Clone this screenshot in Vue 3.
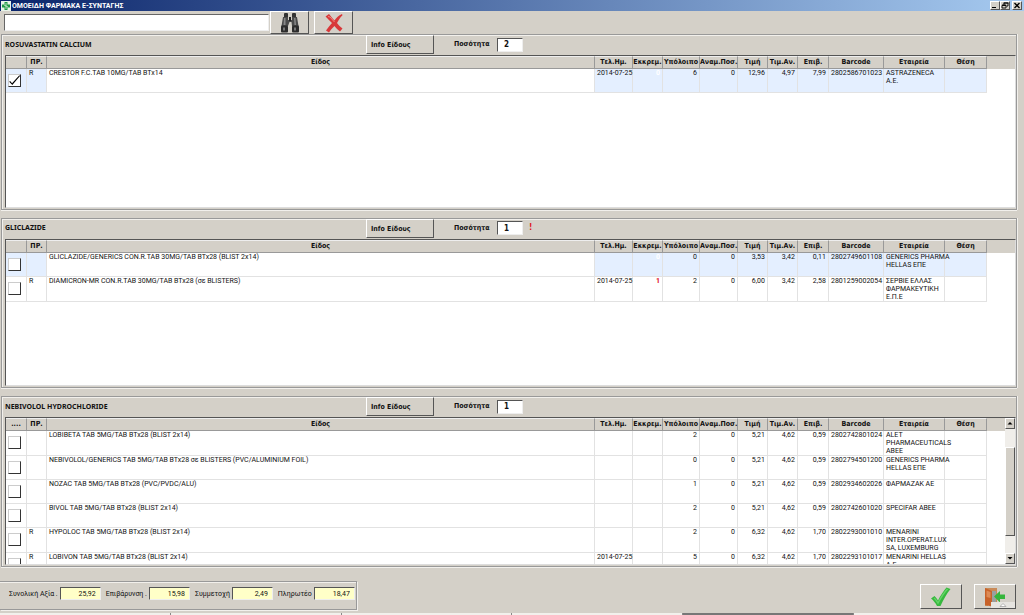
<script setup>
import { reactive, ref } from 'vue'

const search = ref('')

const panels = reactive([
  {
    name: 'ROSUVASTATIN CALCIUM', qty: '2', alert: false, lead: '', scroll: false,
    rows: [
      { on: true, active: true, pr: 'R', item: 'CRESTOR F.C.TAB 10MG/TAB BTx14', date: '2014-07-25', pending: '0', stock: '6', repl: '0', price: '12,96', ref: '4,97', extra: '7,99', code: '2802586701023', firm: ['ASTRAZENECA', 'Α.Ε.'] }
    ]
  },
  {
    name: 'GLICLAZIDE', qty: '1', alert: true, lead: '', scroll: false,
    rows: [
      { on: false, active: true, pr: '', item: 'GLICLAZIDE/GENERICS CON.R.TAB 30MG/TAB BTx28 (BLIST 2x14)', date: '', pending: '0', stock: '0', repl: '0', price: '3,53', ref: '3,42', extra: '0,11', code: '2802749601108', firm: ['GENERICS PHARMA', 'HELLAS ΕΠΕ'] },
      { on: false, active: false, pr: 'R', item: 'DIAMICRON-MR CON.R.TAB 30MG/TAB BTx28 (σε BLISTERS)', date: '2014-07-25', pending: '1', stock: '2', repl: '0', price: '6,00', ref: '3,42', extra: '2,58', code: '2801259002054', firm: ['ΣΕΡΒΙΕ ΕΛΛΑΣ', 'ΦΑΡΜΑΚΕΥΤΙΚΗ', 'Ε.Π.Ε'] }
    ]
  },
  {
    name: 'NEBIVOLOL HYDROCHLORIDE', qty: '1', alert: false, lead: '....', scroll: true,
    rows: [
      { on: false, active: false, pr: '', item: 'LOBIBETA TAB 5MG/TAB BTx28 (BLIST 2x14)', date: '', pending: '', stock: '2', repl: '0', price: '5,21', ref: '4,62', extra: '0,59', code: '2802742801024', firm: ['ALET', 'PHARMACEUTICALS', 'ΑΒΕΕ'] },
      { on: false, active: false, pr: '', item: 'NEBIVOLOL/GENERICS TAB 5MG/TAB BTx28 σε BLISTERS (PVC/ALUMINIUM FOIL)', date: '', pending: '', stock: '0', repl: '0', price: '5,21', ref: '4,62', extra: '0,59', code: '2802794501200', firm: ['GENERICS PHARMA', 'HELLAS ΕΠΕ'] },
      { on: false, active: false, pr: '', item: 'NOZAC TAB 5MG/TAB BTx28 (PVC/PVDC/ALU)', date: '', pending: '', stock: '1', repl: '0', price: '5,21', ref: '4,62', extra: '0,59', code: '2802934602026', firm: ['ΦΑΡΜΑΖΑΚ ΑΕ'] },
      { on: false, active: false, pr: '', item: 'BIVOL TAB 5MG/TAB BTx28 (BLIST 2x14)', date: '', pending: '', stock: '2', repl: '0', price: '5,21', ref: '4,62', extra: '0,59', code: '2802742601020', firm: ['SPECIFAR ΑΒΕΕ'] },
      { on: false, active: false, pr: 'R', item: 'HYPOLOC TAB 5MG/TAB BTx28 (BLIST 2x14)', date: '', pending: '', stock: '2', repl: '0', price: '6,32', ref: '4,62', extra: '1,70', code: '2802293001010', firm: ['MENARINI', 'INTER.OPERAT.LUX', 'SA, LUXEMBURG'] },
      { on: false, active: false, pr: 'R', item: 'LOBIVON TAB 5MG/TAB BTx28 (BLIST 2x14)', date: '2014-07-25', pending: '', stock: '5', repl: '0', price: '6,32', ref: '4,62', extra: '1,70', code: '2802293101017', firm: ['MENARINI HELLAS', 'Α.Ε.'] }
    ]
  }
])

const heads = ['ΠΡ.', 'Είδος', 'Τελ.Ημ.', 'Εκκρεμ.', 'Υπόλοιπο', 'Αναμ.Ποσ.', 'Τιμή', 'Τιμ.Αν.', 'Επιβ.', 'Barcode', 'Εταιρεία', 'Θέση']

const totals = reactive([
  { id: 'total', label: 'Συνολική Αξία .', value: '25,92' },
  { id: 'charge', label: 'Επιβάρυνση .', value: '15,98' },
  { id: 'share', label: 'Συμμετοχή', value: '2,49' },
  { id: 'due', label: 'Πληρωτέο', value: '18,47' }
])
</script>

<template>
  <div class="window">
    <header class="titlebar">
      <svg class="app-icon" viewBox="0 0 10 10" aria-hidden="true">
        <rect width="10" height="10" fill="#e8f4ea" />
        <path d="M3.5 1h3v2.5H9v3H6.500V9h-3V6.500H1v-3h2.500z" fill="#1f9a45" />
        <path d="M5 2v6M3 4l4 2" stroke="#d8f0dc" stroke-width=".8" />
      </svg>
      <h1>ΟΜΟΕΙΔΗ ΦΑΡΜΑΚΑ Ε-ΣΥΝΤΑΓΗΣ</h1>
      <div class="win-buttons">
        <button type="button" aria-label="Minimize"><svg viewBox="0 0 8 7"><path d="M1 5.500h4" stroke="#000" /></svg></button>
        <button type="button" aria-label="Restore"><svg viewBox="0 0 8 7"><path d="M3 3V1h4v3H5.500M2.500 1h5M1 3.500h4V6H1zM1 3h4" fill="none" stroke="#000" stroke-width=".9" /></svg></button>
        <button type="button" aria-label="Close" class="close"><svg viewBox="0 0 8 7"><path d="M1.500 1l5 5M6.500 1l-5 5" stroke="#000" stroke-width="1.300" /></svg></button>
      </div>
    </header>

    <div class="toolbar">
      <input v-model="search" class="search" type="text" aria-label="Αναζήτηση" />
      <button type="button" class="tool" aria-label="Εύρεση">
        <svg width="20" height="20" viewBox="0 0 20 20">
          <rect x="4" y="0" width="4" height="5" rx="1" fill="#333" />
          <rect x="12" y="0" width="4" height="5" rx="1" fill="#333" />
          <path d="M3 4h5v3h4V4h5l1.500 9h-6.500l-.5-4h-2L8 13H1.500z" fill="#4a4a4a" />
          <path d="M4 5h1.500v7H3.500zM14 5h1.500l.5 7h-1.500z" fill="#888" />
          <rect x="1" y="12.500" width="7" height="7" rx="1" fill="#2c2c2c" />
          <rect x="12" y="12.500" width="7" height="7" rx="1" fill="#2c2c2c" />
          <path d="M3 14.500h2v3H3zM14 14.500h2v3h-2z" fill="#777" />
          <rect x="9" y="4" width="2" height="4" fill="#222" />
        </svg>
      </button>
      <button type="button" class="tool" aria-label="Καθαρισμός">
        <svg width="20" height="20" viewBox="0 0 20 20">
          <path d="M1.500 3.500L5 1C7 3.500 8.500 5.500 10.500 7.500C12.500 4.500 14.500 2.500 18 1L18.500 2.200C16 4.500 14.500 7 13 10C14.500 12 16.500 14 18.500 15.500L16 18.500C14 17 12 15 10.500 13C8.500 15 6.500 17 5 19.500L2 17.500C4 14.500 6 12.500 8 10C6 8 4 6 1.500 3.500z" fill="#d8383a" />
          <path d="M4 3.500l2 .5 4.500 5" fill="none" stroke="#f08a80" />
        </svg>
      </button>
    </div>

    <main class="panels">
      <section v-for="(p, i) in panels" :key="p.name" class="panel">
        <div class="panel-head">
          <h2>{{ p.name }}</h2>
          <button type="button" class="info">Info Είδους</button>
          <label :for="'qty' + i">Ποσότητα</label>
          <input :id="'qty' + i" v-model="p.qty" class="qty" type="text" />
          <span v-if="p.alert" class="alert">!</span>
        </div>
        <div class="grid">
          <div class="view">
            <table>
              <colgroup>
                <col class="w-check" /><col class="w-pr" /><col /><col class="w-date" /><col class="w-30" />
                <col class="w-37" /><col class="w-38" /><col class="w-30" /><col class="w-30" /><col class="w-31" />
                <col class="w-code" /><col class="w-firm" /><col class="w-place" /><col :class="p.scroll ? 'w-rest-s' : 'w-rest'" />
              </colgroup>
              <thead>
                <tr>
                  <th>{{ p.lead }}</th>
                  <th v-for="h in heads" :key="h">{{ h }}</th>
                  <th></th>
                </tr>
              </thead>
              <tbody>
                <tr v-for="r in p.rows" :key="r.code" :class="{ active: r.active }">
                  <td class="check"><input v-model="r.on" type="checkbox" :aria-label="r.item" /></td>
                  <td>{{ r.pr }}</td>
                  <td class="item">{{ r.item }}</td>
                  <td class="date">{{ r.date }}</td>
                  <td class="num pending">{{ r.pending }}</td>
                  <td class="num">{{ r.stock }}</td>
                  <td class="num">{{ r.repl }}</td>
                  <td class="num">{{ r.price }}</td>
                  <td class="num">{{ r.ref }}</td>
                  <td class="num">{{ r.extra }}</td>
                  <td class="code">{{ r.code }}</td>
                  <td class="firm"><div v-for="f in r.firm" :key="f">{{ f }}</div></td>
                  <td></td>
                  <td class="rest"></td>
                </tr>
              </tbody>
            </table>
          </div>
          <div v-if="p.scroll" class="scrollbar">
            <button type="button" aria-label="Πάνω"><svg viewBox="0 0 8 8"><path d="M1.500 5.500h5L4 3z" /></svg></button>
            <div class="track"><div class="thumb"></div></div>
            <button type="button" aria-label="Κάτω"><svg viewBox="0 0 8 8"><path d="M1.500 3h5L4 5.500z" /></svg></button>
          </div>
        </div>
      </section>
    </main>

    <footer class="footer">
      <div class="totals">
        <div v-for="t in totals" :key="t.id" class="total">
          <label :for="t.id">{{ t.label }}</label>
          <input :id="t.id" v-model="t.value" type="text" readonly />
        </div>
      </div>
      <div class="actions">
        <button type="button" aria-label="Αποδοχή">
          <svg width="22" height="20" viewBox="0 0 22 20">
            <path d="M1 11.500L4.500 9C6 10.500 7.200 12 8 13.500C10.500 8.500 13.500 4 16.500 .5L20.500 2C16.500 7 13.500 12.500 10.500 19H7C5.500 16 3.500 13.500 1 11.500z" fill="#36b83e" />
            <path d="M4 11c2 1.500 3 3.500 4 5C11 10.500 14 5.500 17.500 2" fill="none" stroke="#62d466" stroke-width="1.500" />
          </svg>
        </button>
        <button type="button" class="exit" aria-label="Έξοδος">
          <svg width="24" height="20" viewBox="0 0 24 20">
            <path d="M2 1h12v18h-3V4H5v15H2z" fill="#c98a58" />
            <path d="M2 1l7 3v15.500L2 18z" fill="#c8622a" />
            <path d="M9 4h4v14H9z" fill="#9aa0a0" />
            <path d="M3.500 3.500l4 1.500v6l-4-1z" fill="#dd8a55" />
            <path d="M11 9.500l6-5.500v3.500h5v4.500h-5v3.500z" fill="#35b53c" />
          </svg>
          <span class="tray"><svg viewBox="0 0 8 6"><path d="M1 4.500l3-3L7 4.500z" fill="#fff" stroke="#999" stroke-width=".7" /></svg></span>
        </button>
      </div>
    </footer>
    <div class="taskbar"><i></i><i></i><i></i><i></i><i class="dark"></i><i></i></div>
  </div>
</template>

<style>
html, body { margin: 0; background: #d4d0c8; }
</style>

<style scoped>
* { box-sizing: border-box; }
.window {
  height: 100vh; display: flex; flex-direction: column; overflow: hidden;
  background: #d4d0c8; color: #111;
  font: 7px/8px Roboto, "Liberation Sans", sans-serif;
}
button, input { font: inherit; color: inherit; margin: 0; }
button { padding: 0; background: #d4d0c8; border: 1px solid; border-color: #fff #555 #555 #fff; }
h1, h2 { margin: 0; font-weight: bold; }

.titlebar { flex: none; height: 11px; display: flex; align-items: center; padding: 0 2px 0 1px; background: linear-gradient(90deg, #0a246a, #a6caf0); }
.app-icon { width: 10px; height: 10px; }
h1 { flex: 1; padding-left: 1px; color: #fff; font: bold 7px/10px Roboto, sans-serif; }
.win-buttons { display: flex; }
.win-buttons button { width: 10px; height: 9px; display: flex; }
.win-buttons .close { margin-left: 2px; }
.win-buttons svg { width: 8px; height: 7px; }

.toolbar { flex: none; height: 23px; display: flex; align-items: flex-start; padding: 0 0 0 4px; }
.search { width: 265px; height: 17px; margin: 3px 1px 0 0; background: #fff; border: 1px solid; border-color: #666 #eee #eee #666; }
.tool { width: 39px; height: 23px; margin-right: 5px; display: flex; align-items: center; justify-content: center; }

.panels { flex: 1; min-height: 0; display: grid; grid-template-rows: 176fr 171fr 171fr; gap: 8px; padding: 0 7px 0 1px; }
.panel { min-height: 0; display: flex; flex-direction: column; border: 1px solid #999; box-shadow: inset 1px 1px #f2f0ec, 0 1px #f2f0ec, 1px 0 #f2f0ec; padding: 0 0 1px 3px; }
.panel-head { flex: none; height: 20px; display: flex; align-items: center; padding-bottom: 1px; font-family: "DejaVu Sans Condensed", "DejaVu Sans", sans-serif; font-weight: bold; }
h2 { width: 361px; padding-bottom: 1px; font: bold 7px/9px "Noto Sans", sans-serif; }
.info { width: 68px; height: 19px; padding: 1px 0 0 4px; text-align: left; border-color: #fff #555 #555 #fff; }
.panel-head label { width: 43px; margin-left: 20px; padding-bottom: 1px; }
.qty { width: 26px; height: 14px; padding: 0 0 0 6px; background: #fff; border: 1px solid; border-color: #555 #eee #eee #555; font-size: 8px; font-weight: bold; }
.alert { margin-left: 6px; color: #e01020; font-size: 8px; }

.grid { flex: 1; min-height: 0; display: flex; background: #fff; border: 1px solid; border-color: #555 #ddd #ddd #555; }
.view { flex: 1; min-width: 0; overflow: hidden; }
table { width: 100%; table-layout: fixed; border-collapse: separate; border-spacing: 0; }
.w-check { width: 21px; } .w-pr { width: 20px; } .w-date { width: 38px; } .w-30 { width: 30px; }
.w-31 { width: 31px; } .w-37 { width: 37px; } .w-38 { width: 38px; } .w-code { width: 55px; } .w-firm { width: 61px; }
.w-place { width: 42px; } .w-rest { width: 28px; } .w-rest-s { width: 18px; }
th { height: 13px; padding: 0; background: #d4d0c8; border: 1px solid; border-color: #eee #999 #999 #eee; border-left: 0; font: bold 7px/9px "DejaVu Sans Condensed", "DejaVu Sans", sans-serif; white-space: nowrap; }
th:last-child { border-color: #d4d0c8; }
td { height: 24px; padding: 0 2px; vertical-align: top; border-right: 1px solid #e2e2e2; border-bottom: 1px solid #e2e2e2; white-space: nowrap; }
.active td { background: #e4efff; }
.active td.item, td.rest, .active td.rest { background: #fff; }
td.rest { border: 0; }
.num { text-align: right; }
.pending { color: #e01020; font-weight: bold; }
.active .pending { color: #fff; }
td.check { padding: 5px 0 0 2px; }
.check input { appearance: none; display: block; width: 13px; height: 13px; background: #fff; border: 1px solid; border-color: #ccc #333 #333 #ccc; }
.check input:checked::before { content: ""; display: block; width: 11px; height: 11px; background: #000; clip-path: polygon(2% 62%, 10% 54%, 28% 74%, 94% 2%, 100% 8%, 30% 92%); }

.scrollbar { flex: none; width: 10px; display: flex; flex-direction: column; background: #f0eeea; }
.scrollbar button { height: 11px; display: flex; }
.scrollbar svg { width: 8px; height: 8px; }
.track { flex: 1; display: flex; padding: 18px 0 17px; }
.thumb { flex: 1; background: #d4d0c8; border: 1px solid; border-color: #fff #555 #555 #fff; }

.footer { flex: none; height: 46px; display: flex; justify-content: space-between; padding: 14px 8px 3px 0; }
.totals { display: flex; align-items: center; height: 29px; padding: 0 1px 4px 9px; border: 1px solid #999; border-left: 0; box-shadow: inset 0 1px #f2f0ec, 1px 1px #f2f0ec; }
.total { display: flex; align-items: center; margin-right: 5px; }
.total:last-child { margin-right: 0; }
.total label { margin-right: 2px; }
.total input { width: 41px; height: 13px; padding: 0 4px; text-align: right; background: #ffffc8; border: 1px solid; border-color: #555 #eee #eee #555; }
.actions { display: flex; gap: 12px; padding-top: 3px; }
.actions button { width: 42px; height: 25px; display: flex; align-items: center; justify-content: center; position: relative; }
.tray { position: absolute; right: 0; bottom: 0; width: 24px; height: 6px; display: flex; justify-content: center; background: #e6e4e0; }
.tray svg { width: 8px; height: 6px; }
.taskbar { flex: none; height: 2px; display: flex; gap: 1px; background: #888; }
.taskbar i { flex: 1; background: #f2f0ec; }
.taskbar .dark { background: #777; }
</style>
